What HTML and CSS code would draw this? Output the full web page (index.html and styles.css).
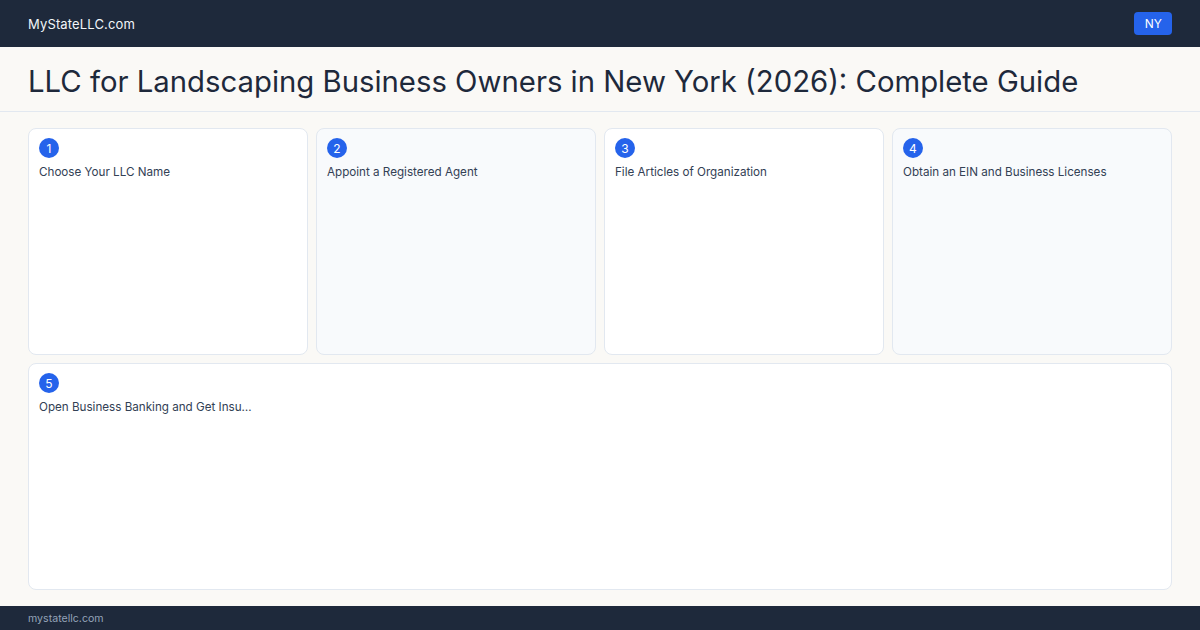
FILE: index.html
```html
<!DOCTYPE html>
<html>
<head>
<meta charset="utf-8">
<link rel="stylesheet" href="styles.css">
</head>
<body>
<header class="topbar">
  <span class="brand">MyStateLLC.com</span>
  <span class="badge">NY</span>
</header>
<div class="titlebar">
  <h1>LLC for Landscaping Business Owners in New York (2026): Complete Guide</h1>
</div>
<main class="grid">
  <div class="card"><span class="num">1</span><p>Choose Your LLC Name</p></div>
  <div class="card alt"><span class="num">2</span><p>Appoint a Registered Agent</p></div>
  <div class="card"><span class="num">3</span><p>File Articles of Organization</p></div>
  <div class="card alt"><span class="num">4</span><p>Obtain an EIN and Business Licenses</p></div>
  <div class="card wide"><span class="num">5</span><p>Open Business Banking and Get Insu…</p></div>
</main>
<footer class="footer">mystatellc.com</footer>
</body>
</html>
```
FILE: styles.css
```css
* { box-sizing: border-box; }
html, body { margin: 0; padding: 0; }
body {
  width: 1200px;
  height: 630px;
  overflow: hidden;
  font-family: Inter, "Noto Sans", sans-serif;
  background: #faf9f6;
  color: #1e293b;
  display: flex;
  flex-direction: column;
}
.topbar {
  height: 47px;
  background: #1e293b;
  display: flex;
  align-items: center;
  justify-content: space-between;
  padding: 0 28px;
  flex-shrink: 0;
}
.brand {
  color: #f1f5f9;
  font-size: 13px;
  letter-spacing: 0.15px;
}
.badge {
  background: #2563eb;
  color: #ffffff;
  font-size: 12px;
  border-radius: 4px;
  padding: 5px 10px 5px 11px;
  line-height: 13px;
}
.titlebar {
  height: 65px;
  border-bottom: 1px solid #e2e8f0;
  display: flex;
  align-items: center;
  padding: 0 28px;
  flex-shrink: 0;
}
.titlebar h1 {
  margin: 0;
  font-weight: 400;
  font-size: 29.3px;
  color: #1e293b;
  padding-top: 4px;
}
.grid {
  flex: 1;
  display: grid;
  grid-template-columns: repeat(4, 1fr);
  grid-template-rows: 1fr 1fr;
  gap: 8px 8px;
  padding: 16px 28px 16px 28px;
}
.card {
  background: #ffffff;
  border: 1px solid #e2e8f0;
  border-radius: 8px;
  padding: 9px 10px;
}
.card.alt { background: #f8fafc; }
.card.wide { grid-column: 1 / span 4; }
.num {
  display: flex;
  align-items: center;
  justify-content: center;
  width: 20px;
  height: 20px;
  border-radius: 50%;
  background: #2563eb;
  color: #ffffff;
  font-size: 12px;
}
.card p {
  margin: 6px 0 0 0;
  font-size: 11.65px;
  color: #334155;
  line-height: 16px;
}
.footer {
  height: 24px;
  background: #1e293b;
  color: #94a3b8;
  font-size: 10.6px;
  padding: 0 28px;
  display: flex;
  align-items: center;
  flex-shrink: 0;
}
```
